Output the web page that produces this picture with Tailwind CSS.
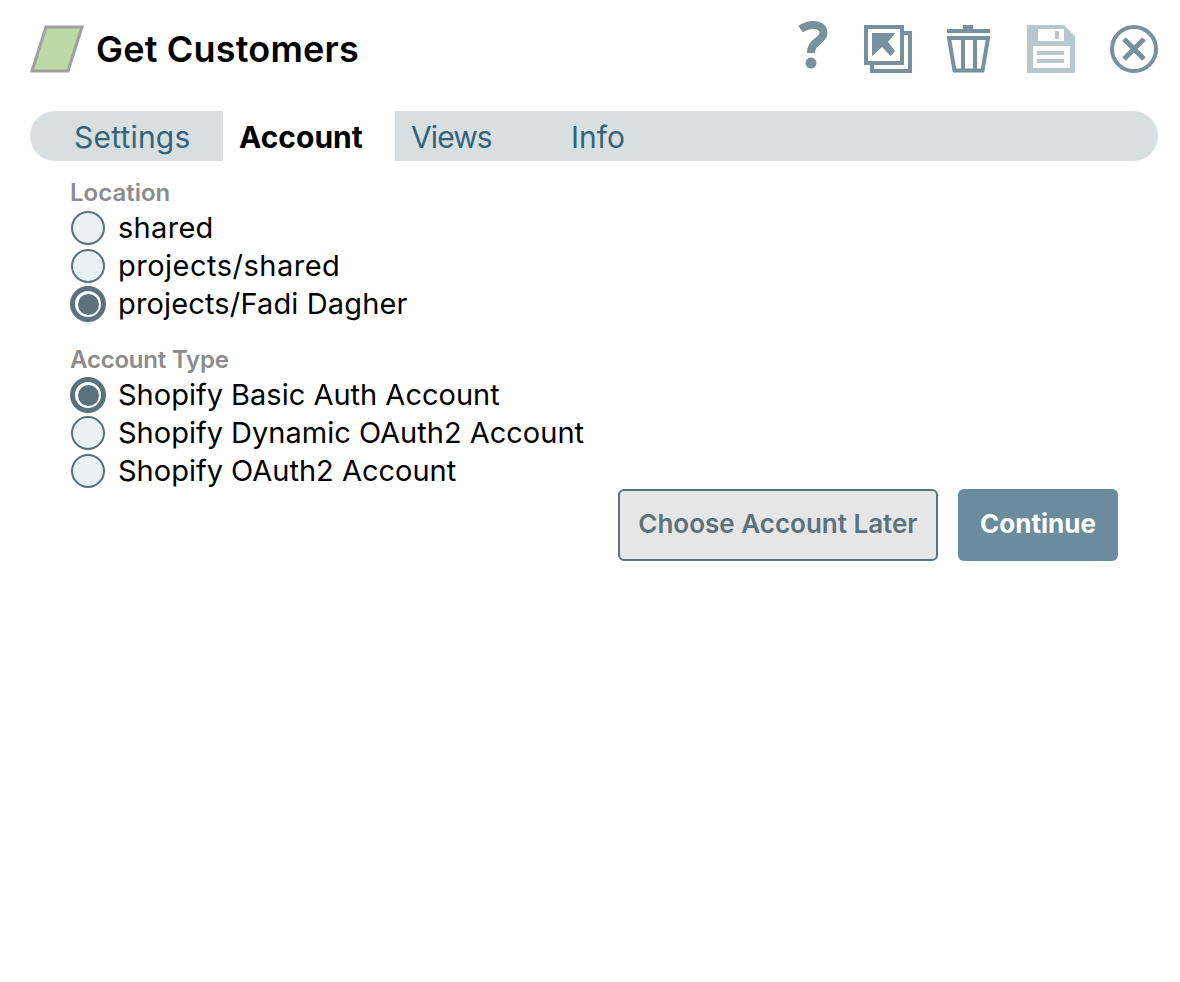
<!DOCTYPE html>
<html lang="en">
<head>
  <meta charset="UTF-8" />
  <title>Get Customers</title>
  <script src="https://cdn.jsdelivr.net/npm/@tailwindcss/browser@4"></script>
</head>
<body class="bg-white font-['Inter',sans-serif] w-[1180px] h-[982px] overflow-hidden">

  <!-- header -->
  <div class="flex items-center justify-between h-[111px] pl-[30px] pr-[22px] pb-[13px]">
    <div class="flex items-center gap-[12px]">
      <svg width="54" height="48" viewBox="0 0 54 48">
        <polygon points="16,2 52,2 38,46 2,46" fill="#bcd9a6" stroke="#a0a0a0" stroke-width="3" />
      </svg>
      <h1 class="text-[36px] font-semibold text-black tracking-[0.2px]">Get Customers</h1>
    </div>
    <div class="flex items-center">
      <!-- help -->
      <svg width="30" height="48" viewBox="0 0 30 48" class="-translate-y-[4px]">
        <path d="M2.5 8 C7 5 11 4 15 4 C22 4 25.5 7 25.5 12 C25.5 20 13 20 13 32" fill="none" stroke="#77919d" stroke-width="8" />
        <circle cx="13" cy="42" r="5.5" fill="#77919d" />
      </svg>
      <!-- export -->
      <svg width="48" height="48" viewBox="0 0 48 48" class="ml-[36px]">
        <path d="M8 8V46H46V8Z" fill="none" stroke="#77919d" stroke-width="4" />
        <rect x="2" y="2" width="36" height="36" fill="#fff" stroke="#77919d" stroke-width="4" />
        <path d="M8 8H31.3L24 17L31 26L26.7 31.3L18 22L8 31.3Z" fill="#77919d" />
      </svg>
      <!-- trash -->
      <svg width="43" height="48" viewBox="0 0 43 48" class="ml-[35px]">
        <rect x="16" y="0" width="10" height="4" fill="#77919d" />
        <rect x="0" y="4" width="43" height="4" fill="#77919d" />
        <path d="M2 13H41L35.5 45.5H7.5Z" fill="none" stroke="#77919d" stroke-width="4" />
        <rect x="14" y="11" width="4" height="36" fill="#77919d" />
        <rect x="26" y="11" width="4" height="36" fill="#77919d" />
      </svg>
      <!-- save -->
      <svg width="48" height="48" viewBox="0 0 48 48" class="ml-[37px]">
        <path d="M0 0H37L48 11V48H0Z" fill="#b8c7ce" />
        <rect x="11" y="4" width="26" height="12" fill="#fff" />
        <rect x="28" y="6" width="4" height="8" fill="#b8c7ce" />
        <rect x="6" y="21" width="37" height="22" fill="#fff" />
        <rect x="10" y="26" width="27" height="4" fill="#b8c7ce" />
        <rect x="10" y="34" width="27" height="4" fill="#b8c7ce" />
      </svg>
      <!-- close -->
      <svg width="48" height="48" viewBox="0 0 48 48" class="ml-[35px]">
        <circle cx="24" cy="24" r="22" fill="none" stroke="#77919d" stroke-width="4" />
        <path d="M14 14L34 34M34 14L14 34" fill="none" stroke="#77919d" stroke-width="5" />
      </svg>
    </div>
  </div>

  <!-- tabs -->
  <div class="flex h-[50px] mx-[30px] w-[1128px] rounded-[25px] bg-[#d8dfe1] text-[30px] leading-[52px] text-[#35637a] overflow-hidden">
    <div class="w-[193px] pl-[44px] tracking-[0.2px]">Settings</div>
    <div class="w-[172px] bg-white pl-[16px] font-bold text-black">Account</div>
    <div class="w-[160px] pl-[16px] tracking-[-0.9px]">Views</div>
    <div class="pl-[16px]">Info</div>
  </div>

  <!-- account form -->
  <div class="pl-[70px] pr-[62px] pt-[17px]">
    <div class="text-[24px] leading-[30px] font-semibold text-[#8c8c8c] mb-[1px]">Location</div>
    <div class="flex flex-col text-[29px] leading-[38px] text-black">
      <label class="flex items-center gap-[13px] pl-[1px] tracking-[0.3px]">
        <span class="w-[34px] h-[34px] rounded-full bg-[#e8f1f4] border-2 border-[#5a717e]"></span>shared
      </label>
      <label class="flex items-center gap-[13px] pl-[1px] tracking-[0.5px]">
        <span class="w-[34px] h-[34px] rounded-full bg-[#e8f1f4] border-2 border-[#5a717e]"></span>projects/shared
      </label>
      <label class="flex items-center gap-[13px] pl-[1px] tracking-[0.15px]">
        <span class="flex items-center justify-center shrink-0 w-[36px] h-[36px] -mx-[1px] rounded-full bg-white border-[5px] border-[#5a717e]"><span class="w-[21px] h-[21px] rounded-full bg-[#5a717e]"></span></span>projects/Fadi Dagher
      </label>
    </div>

    <div class="text-[24px] leading-[30px] font-semibold text-[#8c8c8c] tracking-[-0.2px] mt-[22px] mb-[1px]">Account Type</div>
    <div class="flex flex-col text-[29px] leading-[38px] text-black">
      <label class="flex items-center gap-[13px] pl-[1px]">
        <span class="flex items-center justify-center shrink-0 w-[36px] h-[36px] -mx-[1px] rounded-full bg-white border-[5px] border-[#5a717e]"><span class="w-[21px] h-[21px] rounded-full bg-[#5a717e]"></span></span>Shopify Basic Auth Account
      </label>
      <label class="flex items-center gap-[13px] pl-[1px]">
        <span class="w-[34px] h-[34px] rounded-full bg-[#e8f1f4] border-2 border-[#5a717e]"></span>Shopify Dynamic OAuth2 Account
      </label>
      <label class="flex items-center gap-[13px] pl-[1px]">
        <span class="w-[34px] h-[34px] rounded-full bg-[#e8f1f4] border-2 border-[#5a717e]"></span>Shopify OAuth2 Account
      </label>
    </div>

    <div class="flex justify-end gap-[20px] -mt-[1px]">
      <button class="w-[320px] h-[72px] pb-[3px] rounded-[6px] bg-[#e6e6e6] border-2 border-[#5a717e] text-[26px] font-semibold text-[#5a717e]">Choose Account Later</button>
      <button class="w-[160px] h-[72px] pb-[3px] rounded-[6px] bg-[#6b8c9c] text-[26px] font-bold text-white">Continue</button>
    </div>
  </div>

</body>
</html>
